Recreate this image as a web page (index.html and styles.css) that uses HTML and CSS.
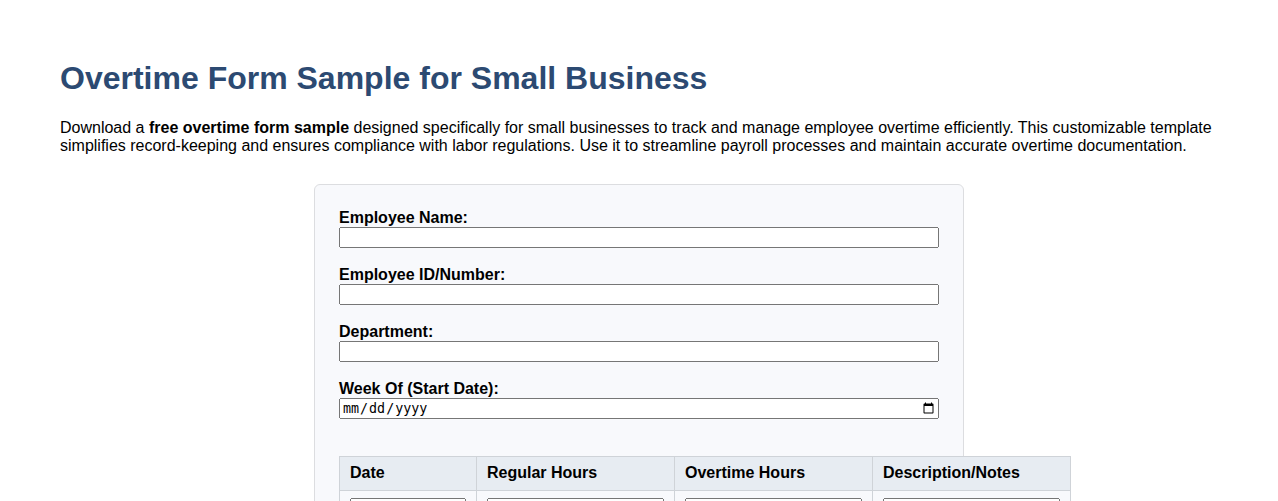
FILE: index.html
```html
<!DOCTYPE html>
<html lang="en">
<head>
<meta charset="utf-8">
<title>Overtime Form Sample for Small Business</title>
<link rel="stylesheet" href="styles.css">
</head>
<body>
  <h1 class="title">Overtime Form Sample for Small Business</h1>
  <p class="intro">Download a <strong>free overtime form sample</strong> designed specifically for small businesses to track and manage employee overtime efficiently. This customizable template simplifies record-keeping and ensures compliance with labor regulations. Use it to streamline payroll processes and maintain accurate overtime documentation.</p>

  <form class="form-card">
    <div class="field">
      <label class="field-label" for="name">Employee Name:</label>
      <input class="field-input" type="text" id="name">
    </div>
    <div class="field">
      <label class="field-label" for="empid">Employee ID/Number:</label>
      <input class="field-input" type="text" id="empid">
    </div>
    <div class="field">
      <label class="field-label" for="dept">Department:</label>
      <input class="field-input" type="text" id="dept">
    </div>
    <div class="field">
      <label class="field-label" for="week">Week Of (Start Date):</label>
      <input class="field-input" type="date" id="week">
    </div>

    <table class="hours-table">
      <thead>
        <tr>
          <th>Date</th>
          <th>Regular Hours</th>
          <th>Overtime Hours</th>
          <th>Description/Notes</th>
        </tr>
      </thead>
      <tbody>
        <tr>
          <td><input class="cell-date" type="date"></td>
          <td><input class="cell-input" type="text"></td>
          <td><input class="cell-input" type="text"></td>
          <td><input class="cell-input" type="text"></td>
        </tr>
        <tr>
          <td><input class="cell-date" type="date"></td>
          <td><input class="cell-input" type="text"></td>
          <td><input class="cell-input" type="text"></td>
          <td><input class="cell-input" type="text"></td>
        </tr>
      </tbody>
    </table>
  </form>
</body>
</html>
```

FILE: styles.css
```css
html, body {
  background: #ffffff;
}

body {
  margin: 0;
  padding: 38px 60px 40px;
  font-family: "Liberation Sans", Arial, sans-serif;
  color: #000;
}

.title {
  margin: 22px 0 22px;
  font-size: 32px;
  line-height: 37px;
  font-weight: bold;
  color: #2c4a72;
}

.intro {
  margin: 0;
  font-size: 16px;
  line-height: 17.5px;
}

.form-card {
  width: 600px;
  margin: 30px auto 0;
  padding: 24px 24px 30px;
  background: #f8f9fc;
  border: 1px solid #dcdde0;
  border-radius: 6px;
}

.field {
  margin-bottom: 18px;
}

.field-label {
  display: block;
  font-size: 16px;
  font-weight: bold;
}

.field-input {
  display: block;
  width: 600px;
  box-sizing: border-box;
  margin: 0;
}

.hours-table {
  width: 100%;
  margin-top: 37px;
  border-collapse: collapse;
}

.hours-table th,
.hours-table td {
  border: 1px solid #cfd3d8;
  padding: 7px 10px 8px;
  text-align: left;
}

.hours-table th {
  background: #e7ecf2;
  font-size: 16px;
  font-weight: bold;
}

.hours-table td {
  background: #f8f9fc;
}

.cell-date {
  width: 116px;
  box-sizing: border-box;
  margin: 0;
}

.cell-input {
  width: 177px;
  box-sizing: border-box;
  margin: 0;
}
```
